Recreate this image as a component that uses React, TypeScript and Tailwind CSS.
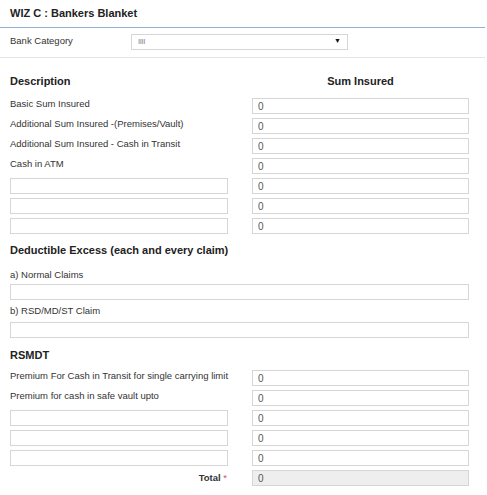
import React from 'react';

const inputBase =
  'h-[16px] w-full border border-[#d6d6d6] px-[5px] text-[10px] leading-[14px] text-[#555] outline-none';
const inputCls = inputBase + ' bg-white';

const sumRows = [
  'Basic Sum Insured',
  'Additional Sum Insured -(Premises/Vault)',
  'Additional Sum Insured - Cash in Transit',
  'Cash in ATM',
  null,
  null,
  null,
];

const premiumRows = [
  'Premium For Cash in Transit for single carrying limit',
  'Premium for cash in safe vault upto',
  null,
  null,
  null,
];

function Row({ label }: { label: string | null }) {
  return (
    <>
      {label ? (
        <div className="text-[9.5px] leading-[11px] text-[#333] whitespace-nowrap">{label}</div>
      ) : (
        <input className={inputCls} defaultValue="" />
      )}
      <input className={inputCls} defaultValue="0" />
    </>
  );
}

export default function App() {
  return (
    <div className="w-[487px] h-[495px] bg-white [font-family:'Liberation_Sans',Arial,sans-serif] overflow-hidden">
      <div className="w-[485px]">
        {/* header */}
        <div className="h-[28px] flex items-center px-[10px] border-b border-[#8fb4d8]">
          <span className="text-[11px] font-bold text-[#222]">WIZ C : Bankers Blanket</span>
        </div>
        <div className="h-[30px] flex items-center px-[10px] border-b border-[#e4e4e4]">
          <span className="w-[121px] text-[9.5px] text-[#333] -mt-[3px]">Bank Category</span>
          <div className="w-[217px] h-[16px] -mt-[2px] border border-[#d6d6d6] flex items-center justify-between px-[6px]">
            <span className="text-[8px] text-[#888] tracking-[-0.5px]">IIII</span>
            <span className="text-[7px] text-[#111]">▼</span>
          </div>
        </div>
      </div>

      <div className="px-[10px]">
        <div className="grid grid-cols-[218px_217px] gap-x-[24px] pt-[17px]">
          <div className="text-[11px] font-bold leading-[13px] text-[#222]">Description</div>
          <div className="text-[11px] font-bold leading-[13px] text-[#222] text-center">Sum Insured</div>
        </div>
        <div className="grid grid-cols-[218px_217px] gap-x-[24px] gap-y-[4px] mt-[10px]">
          {sumRows.map((r, i) => (
            <Row key={i} label={r} />
          ))}
        </div>

        <div className="mt-[10px] text-[11px] font-bold leading-[13px] text-[#222]">
          Deductible Excess (each and every claim)
        </div>
        <div className="w-[459px]">
          <div className="mt-[12px] text-[9.5px] leading-[11px] text-[#333]">a) Normal Claims</div>
          <input className={inputCls + ' mt-[4px] block'} defaultValue="" />
          <div className="mt-[5px] text-[9.5px] leading-[11px] text-[#333]">b) RSD/MD/ST Claim</div>
          <input className={inputCls + ' mt-[6px] block'} defaultValue="" />
        </div>

        <div className="mt-[11px] text-[11px] font-bold leading-[13px] text-[#222]">RSMDT</div>
        <div className="grid grid-cols-[218px_217px] gap-x-[24px] gap-y-[4px] mt-[8px]">
          {premiumRows.map((r, i) => (
            <Row key={i} label={r} />
          ))}
          <div className="text-right text-[9.5px] font-bold leading-[16px] text-[#333] pr-[1px]">
            Total <span className="text-[#e05050] font-normal">*</span>
          </div>
          <input className={inputBase + ' bg-[#eeeeee]'} defaultValue="0" readOnly />
        </div>
      </div>
    </div>
  );
}
